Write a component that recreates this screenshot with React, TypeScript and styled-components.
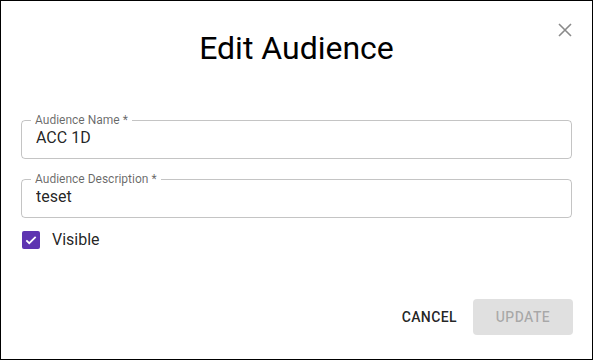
import styled, { createGlobalStyle } from 'styled-components';

const GlobalStyle = createGlobalStyle`
  html, body {
    margin: 0;
    padding: 0;
    background: #fff;
  }
  * {
    box-sizing: border-box;
  }
`;

const fields = [
  { label: 'Audience Name *', value: 'ACC 1D' },
  { label: 'Audience Description *', value: 'teset' },
];

const App = () => {
  return (
    <>
      <GlobalStyle />
      <Dialog>
        <CloseButton aria-label="close">
          <svg width="14" height="14" viewBox="0 0 14 14">
            <path d="M1 1L13 13M13 1L1 13" stroke="#8a8a8a" strokeWidth="1.6" fill="none" />
          </svg>
        </CloseButton>
        <Title>Edit Audience</Title>
        <Form>
          {fields.map(field => (
            <Field key={field.label}>
              <Legend>{field.label}</Legend>
              <Input defaultValue={field.value} />
            </Field>
          ))}
          <CheckRow>
            <CheckBox>
              <svg width="14" height="14" viewBox="0 0 24 24">
                <path d="M4 12.5l5 5L20 6.5" stroke="#fff" strokeWidth="3" fill="none" />
              </svg>
            </CheckBox>
            <CheckLabel>Visible</CheckLabel>
          </CheckRow>
        </Form>
        <Actions>
          <TextButton>Cancel</TextButton>
          <ContainedButton disabled>Update</ContainedButton>
        </Actions>
      </Dialog>
    </>
  );
};

export default App;

const Dialog = styled.div`
  position: relative;
  display: flex;
  flex-direction: column;
  width: 593px;
  height: 360px;
  border: 1px solid #000;
  background-color: #fff;
  font-family: Roboto, 'Liberation Sans', sans-serif;
  color: rgba(0, 0, 0, 0.87);
`;

const CloseButton = styled.button`
  position: absolute;
  top: 22px;
  right: 20px;
  display: flex;
  padding: 0;
  border: 0;
  background: none;
  cursor: pointer;
`;

const Title = styled.h2`
  margin: 0;
  padding-top: 28px;
  text-align: center;
  font-size: 32px;
  font-weight: 400;
  line-height: 38px;
  color: #000;
`;

const Form = styled.div`
  display: flex;
  flex-direction: column;
  gap: 13px;
  padding: 46px 20px 0 20px;
`;

const Field = styled.fieldset`
  margin: 0;
  padding: 0 14px 11px;
  border: 1px solid rgba(0, 0, 0, 0.23);
  border-radius: 4px;
`;

const Legend = styled.legend`
  margin-left: -5px;
  padding: 0 4px;
  font-size: 12px;
  line-height: 14px;
  color: rgba(0, 0, 0, 0.6);
`;

const Input = styled.input`
  display: block;
  width: 100%;
  height: 20px;
  margin: 0;
  padding: 0;
  border: 0;
  outline: none;
  font-family: inherit;
  font-size: 16px;
  color: rgba(0, 0, 0, 0.87);
  background: transparent;
`;

const CheckRow = styled.label`
  display: flex;
  align-items: center;
  gap: 12px;
  margin-top: -1px;
  padding-left: 1px;
`;

const CheckBox = styled.span`
  display: flex;
  align-items: center;
  justify-content: center;
  width: 18px;
  height: 18px;
  border-radius: 2px;
  background-color: #5e35b1;
`;

const CheckLabel = styled.span`
  font-size: 16px;
  color: rgba(0, 0, 0, 0.87);
`;

const Actions = styled.div`
  display: flex;
  justify-content: flex-end;
  align-items: center;
  gap: 8px;
  margin-top: auto;
  padding: 0 19px 24px 20px;
`;

const TextButton = styled.button`
  height: 36px;
  padding: 0 8px;
  border: 0;
  border-radius: 4px;
  background: none;
  font-family: inherit;
  font-size: 14px;
  font-weight: 500;
  letter-spacing: 0.4px;
  text-transform: uppercase;
  color: rgba(0, 0, 0, 0.87);
  cursor: pointer;
`;

const ContainedButton = styled.button`
  width: 100px;
  height: 36px;
  border: 0;
  border-radius: 4px;
  background-color: #e0e0e0;
  font-family: inherit;
  font-size: 14px;
  font-weight: 500;
  letter-spacing: 0.4px;
  text-transform: uppercase;
  color: rgba(0, 0, 0, 0.26);
`;
